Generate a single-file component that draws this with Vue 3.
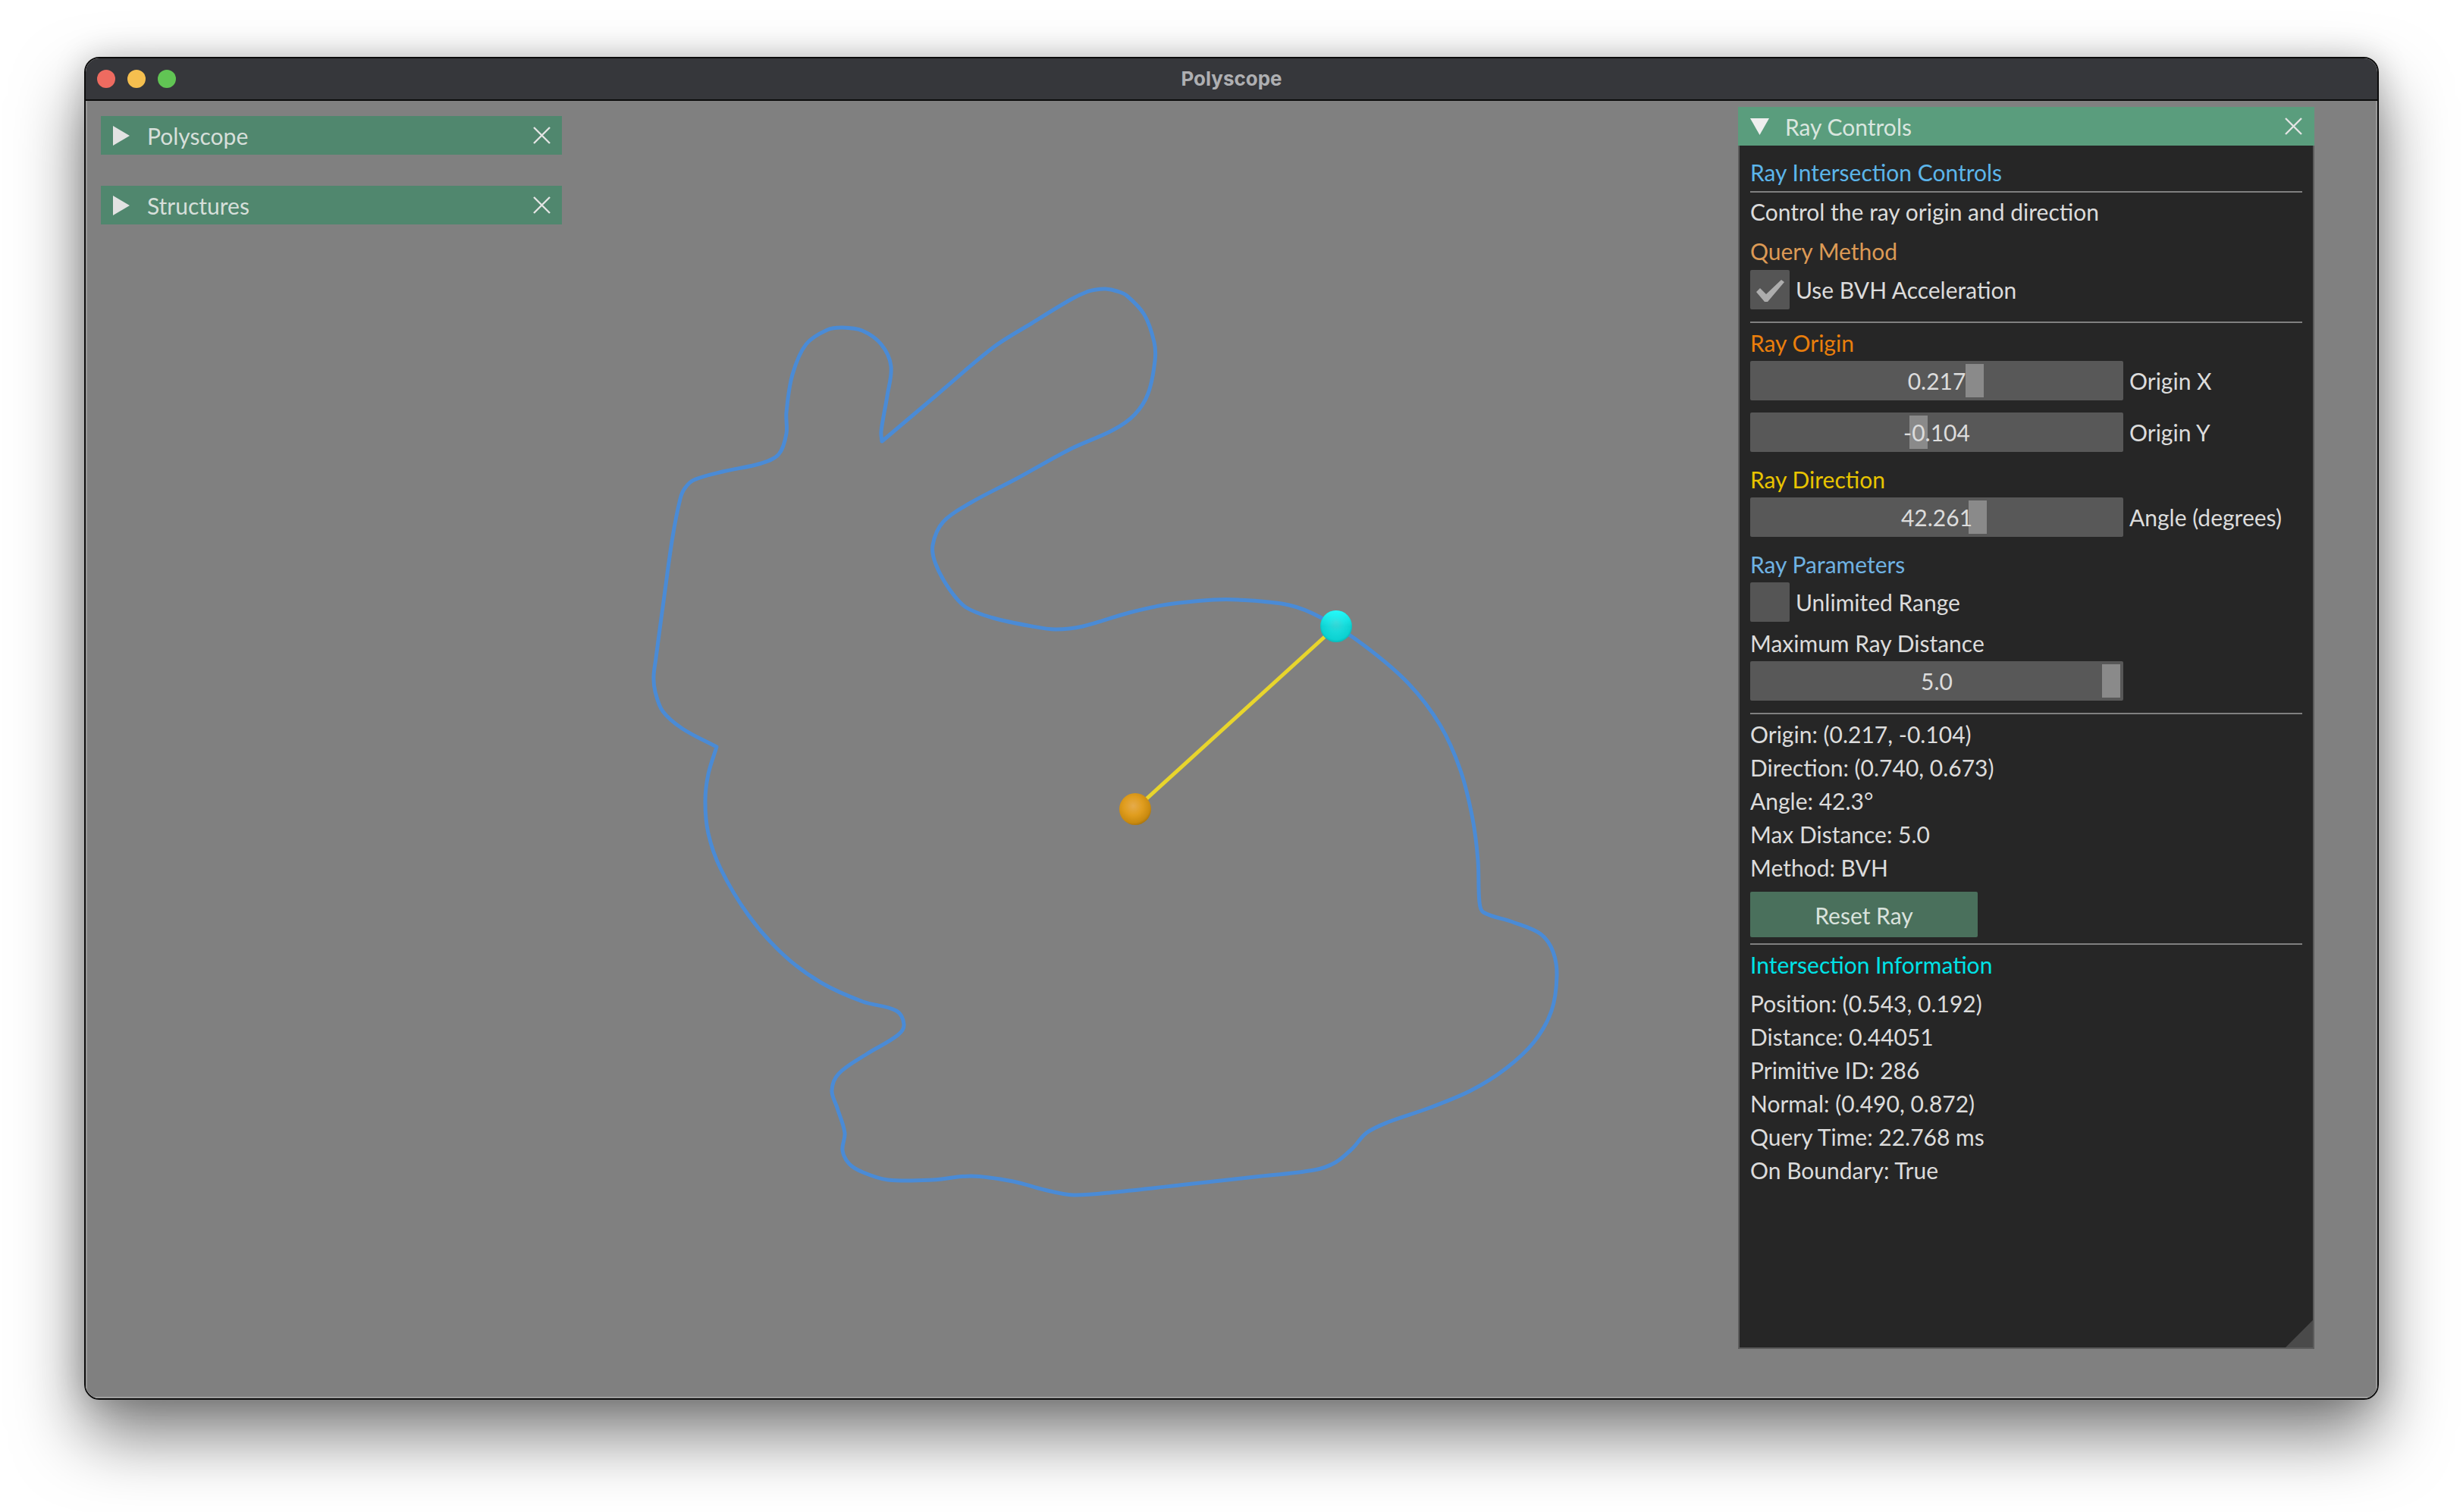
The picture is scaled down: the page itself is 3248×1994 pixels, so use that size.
<template>
  <div class="page">
    <div class="window">
      <div class="titlebar">
        <div class="lights">
          <span class="light red"></span>
          <span class="light yellow"></span>
          <span class="light green"></span>
        </div>
        <span class="window-title">Polyscope</span>
      </div>

      <div class="canvas">
        <!-- scene uses page coordinates, so the traced points read directly -->
        <svg class="scene" viewBox="113 133 3022 1711">
          <defs>
            <radialGradient id="cyanBall" cx="0.5" cy="0.5" r="0.56" fx="0.5" fy="0.36">
              <stop offset="0" stop-color="#3ed2d2" />
              <stop offset="0.45" stop-color="#18dada" />
              <stop offset="0.8" stop-color="#0cd2d2" />
              <stop offset="1" stop-color="#07a8a8" />
            </radialGradient>
            <linearGradient id="cyanRim" x1="0.5" y1="0" x2="0.5" y2="0.5">
              <stop offset="0" stop-color="#28ffff" stop-opacity="0.9" />
              <stop offset="1" stop-color="#28ffff" stop-opacity="0" />
            </linearGradient>
            <radialGradient id="orangeBall" cx="0.44" cy="0.4" r="0.66">
              <stop offset="0" stop-color="#e5ab4c" />
              <stop offset="0.45" stop-color="#e09d1e" />
              <stop offset="0.8" stop-color="#c98a10" />
              <stop offset="1" stop-color="#9c6a0a" />
            </radialGradient>
          </defs>
          <path class="outline" :d="outlinePath" />
          <line class="ray" x1="1497" y1="1067" x2="1762" y2="826" />
          <circle cx="1762" cy="826" r="21" fill="url(#cyanBall)" />
          <circle cx="1762" cy="826" r="21" fill="url(#cyanRim)" />
          <circle cx="1497" cy="1067" r="21" fill="url(#orangeBall)" />
        </svg>

        <div class="left-panels">
          <div v-for="name in collapsedPanels" :key="name" class="collapsed">
            <svg class="arrow-right" viewBox="0 0 22 26"><path d="M0 0L22 13L0 26Z" /></svg>
            <span class="panel-name">{{ name }}</span>
            <svg class="close" viewBox="0 0 23 23"><path d="M1 1L22 22M22 1L1 22" /></svg>
          </div>
        </div>

        <div class="ray-panel">
          <div class="ray-header">
            <svg class="arrow-down" viewBox="0 0 25 22"><path d="M0 0H25L12.5 22Z" /></svg>
            <span class="panel-name">Ray Controls</span>
            <svg class="close" viewBox="0 0 23 23"><path d="M1 1L22 22M22 1L1 22" /></svg>
          </div>

          <div class="ray-body">
            <div class="line heading blue">Ray Intersection Controls</div>
            <div class="sep tight"></div>
            <div class="line intro">Control the ray origin and direction</div>
            <div class="line heading query method">Query Method</div>
            <div class="check-row first">
              <span class="check">
                <svg viewBox="0 0 37 29"><path d="M0 16L5 11L13 19L33 0L37 3L15 29H11Z" /></svg>
              </span>
              <span>Use BVH Acceleration</span>
            </div>
            <div class="sep"></div>
            <div class="line heading origin after-sep">Ray Origin</div>
            <div v-for="s in originSliders" :key="s.label" class="slider-row">
              <div class="slider">
                <span class="grab" :style="{ left: s.grab + 'px' }"></span>
                <span class="slider-value">{{ s.value }}</span>
              </div>
              <span>{{ s.label }}</span>
            </div>
            <div class="line heading direction section">Ray Direction</div>
            <div class="slider-row">
              <div class="slider">
                <span class="grab" style="left: 288px"></span>
                <span class="slider-value">42.261</span>
              </div>
              <span>Angle (degrees)</span>
            </div>
            <div class="line heading params section">Ray Parameters</div>
            <div class="check-row">
              <span class="check"></span>
              <span>Unlimited Range</span>
            </div>
            <div class="line max-label">Maximum Ray Distance</div>
            <div class="slider-row">
              <div class="slider">
                <span class="grab" style="left: 464px"></span>
                <span class="slider-value">5.0</span>
              </div>
            </div>
            <div class="sep"></div>
            <div class="info-list after-sep">
              <div v-for="t in rayInfo" :key="t" class="line">{{ t }}</div>
            </div>
            <button class="reset">Reset Ray</button>
            <div class="sep under-reset"></div>
            <div class="line heading cyan after-sep">Intersection Information</div>
            <div class="info-list section">
              <div v-for="t in hitInfo" :key="t" class="line">{{ t }}</div>
            </div>
          </div>

          <svg class="grip" viewBox="0 0 36 36"><path d="M36 0V36H0Z" /></svg>
        </div>
      </div>
    </div>
  </div>
</template>

<script setup>
import { computed } from 'vue'

const collapsedPanels = ['Polyscope', 'Structures']

const originSliders = [
  { label: 'Origin X', value: '0.217', grab: 284 },
  { label: 'Origin Y', value: '-0.104', grab: 210 }
]

const rayInfo = [
  'Origin: (0.217, -0.104)',
  'Direction: (0.740, 0.673)',
  'Angle: 42.3°',
  'Max Distance: 5.0',
  'Method: BVH'
]

const hitInfo = [
  'Position: (0.543, 0.192)',
  'Distance: 0.44051',
  'Primitive ID: 286',
  'Normal: (0.490, 0.872)',
  'Query Time: 22.768 ms',
  'On Boundary: True'
]

// traced from the reference, clockwise from the notch between the ears
const outline = [
  [1163, 582], [1234, 522], [1310, 458], [1361, 426], [1412, 395], [1433, 385], [1445, 382],
  [1458, 381], [1473, 384], [1486, 390], [1509, 415], [1522, 451], [1523, 476], [1514, 519],
  [1496, 547], [1468, 567], [1412, 592], [1341, 631], [1280, 663], [1244, 688], [1230, 719],
  [1234, 744], [1252, 777], [1274, 801], [1310, 815], [1361, 826], [1392, 830], [1428, 826],
  [1489, 808], [1540, 797], [1600, 791], [1633, 791], [1700, 798], [1743, 815], [1800, 852],
  [1857, 901], [1899, 956], [1926, 1016], [1942, 1080], [1949, 1135], [1951, 1190],
  [1956, 1203], [1995, 1216], [2032, 1232], [2048, 1255], [2053, 1287], [2046, 1333],
  [2023, 1374], [1986, 1409], [1940, 1438], [1885, 1461], [1830, 1480], [1802, 1494],
  [1784, 1514], [1761, 1533], [1733, 1543], [1655, 1552], [1564, 1562], [1472, 1572],
  [1415, 1576], [1377, 1569], [1336, 1558], [1281, 1551], [1230, 1556], [1171, 1556],
  [1138, 1546], [1120, 1535], [1111, 1517], [1114, 1494], [1104, 1461], [1097, 1438],
  [1106, 1416], [1143, 1390], [1184, 1365], [1192, 1351], [1182, 1333], [1138, 1321],
  [1083, 1296], [1033, 1259], [987, 1207], [950, 1145], [934, 1099], [930, 1057], [934, 1021],
  [945, 985], [900, 961], [874, 938], [864, 912], [862, 892], [865, 868], [870, 830],
  [876, 786], [887, 708], [897, 658], [903, 644], [915, 633], [953, 622], [1004, 611],
  [1027, 599], [1037, 572], [1037, 544], [1045, 494], [1063, 454], [1091, 435], [1111, 432],
  [1137, 436], [1162, 454], [1175, 483], [1170, 522], [1162, 569]
]

// points where the curve has a hard corner
const corners = new Set([0, 84])

function unit(a, b) {
  const dx = b[0] - a[0]
  const dy = b[1] - a[1]
  const len = Math.hypot(dx, dy) || 1
  return [dx / len, dy / len]
}

// closed curve through the points; handles scale with each segment so uneven spacing doesn't overshoot
const outlinePath = computed(() => {
  const n = outline.length
  let d = `M${outline[0][0]} ${outline[0][1]}`
  for (let i = 0; i < n; i++) {
    const p0 = outline[(i - 1 + n) % n]
    const p1 = outline[i]
    const p2 = outline[(i + 1) % n]
    const p3 = outline[(i + 2) % n]
    const len = Math.hypot(p2[0] - p1[0], p2[1] - p1[1]) / 3
    const t1 = corners.has(i) ? unit(p1, p2) : unit(p0, p2)
    const t2 = corners.has((i + 1) % n) ? unit(p1, p2) : unit(p1, p3)
    const c1x = p1[0] + t1[0] * len
    const c1y = p1[1] + t1[1] * len
    const c2x = p2[0] - t2[0] * len
    const c2y = p2[1] - t2[1] * len
    d += `C${c1x.toFixed(1)} ${c1y.toFixed(1)} ${c2x.toFixed(1)} ${c2y.toFixed(1)} ${p2[0]} ${p2[1]}`
  }
  return d + 'Z'
})
</script>

<style>
html,
body {
  margin: 0;
  background: #fff;
}
</style>

<style scoped>
.page {
  box-sizing: border-box;
  width: 3248px;
  height: 1994px;
  padding: 75px 111px 148px 111px;
  font-family: Lato, "Open Sans", sans-serif;
  font-size: 30px;
  color: #dcdcdc;
  overflow: hidden;
}

.window {
  display: flex;
  flex-direction: column;
  height: 100%;
  box-sizing: border-box;
  border: 2px solid #0c0c0c;
  border-radius: 20px;
  overflow: hidden;
  box-shadow: 0 46px 90px rgba(0, 0, 0, 0.52), 0 0 40px rgba(0, 0, 0, 0.18);
}

.titlebar {
  position: relative;
  flex: none;
  height: 54px;
  display: flex;
  align-items: center;
  justify-content: center;
  background: #36373b;
  border-bottom: 2px solid #0c0c0c;
}

.lights {
  position: absolute;
  left: 15px;
  top: 15px;
  display: flex;
  gap: 16px;
}

.light {
  width: 24px;
  height: 24px;
  border-radius: 50%;
}

.red {
  background: #ee6b60;
}

.yellow {
  background: #f5bf4f;
}

.green {
  background: #61c554;
}

.window-title {
  padding-bottom: 2px;
  font-family: Inter, "Liberation Sans", sans-serif;
  font-weight: 700;
  font-size: 26px;
  color: #aeafb2;
}

.canvas {
  position: relative;
  flex: 1;
  background: #808080;
  box-shadow: inset 2px 0 0 #989898, inset -2px 0 0 #989898, inset 0 -2px 0 #a0a0a0;
}

.scene {
  position: absolute;
  left: 0;
  top: 0;
  width: 100%;
  height: 100%;
}

.outline {
  fill: none;
  stroke: #4a8bd6;
  stroke-width: 5;
  stroke-linejoin: round;
}

.ray {
  stroke: #e8d52c;
  stroke-width: 5;
}

.left-panels {
  position: absolute;
  left: 20px;
  top: 20px;
  display: flex;
  flex-direction: column;
  gap: 41px;
}

.collapsed {
  display: flex;
  align-items: center;
  box-sizing: border-box;
  width: 608px;
  height: 51px;
  padding: 0 15px 0 16px;
  background: #50876e;
  color: #d6dfda;
}

.arrow-right {
  flex: none;
  width: 22px;
  height: 26px;
  margin-right: 23px;
  fill: #e2e2e2;
}

.panel-name {
  flex: 1;
  line-height: 30px;
}

.close {
  flex: none;
  width: 23px;
  height: 23px;
  fill: none;
  stroke: #e4e4e4;
  stroke-width: 2.4;
}

.ray-panel {
  position: absolute;
  left: 2179px;
  top: 8px;
  box-sizing: border-box;
  width: 760px;
  height: 1638px;
  background: #262626;
  border: solid #5c5c5c;
  border-width: 0 2px 2px 2px;
}

.ray-header {
  display: flex;
  align-items: center;
  box-sizing: border-box;
  width: 760px;
  height: 51px;
  margin-left: -2px;
  padding: 0 16px;
  background: #5a9d7d;
  color: #d9e6df;
}

.arrow-down {
  flex: none;
  width: 25px;
  height: 22px;
  margin-right: 21px;
  fill: #eeeeee;
}

.ray-body {
  padding: 20px 14px 0;
}

.line {
  height: 30px;
  line-height: 30px;
  white-space: nowrap;
}

.heading.blue {
  color: #5cb5ea;
}

.heading.query {
  color: #dc9a55;
}

.heading.origin {
  color: #ea7f0c;
}

.heading.direction {
  color: #e8c400;
}

.heading.params {
  color: #6fb2e2;
}

.heading.cyan {
  color: #00e2e6;
}

.section {
  margin-top: 21px;
}

.after-sep {
  margin-top: 11px;
}

.intro {
  margin-top: 10px;
}

.method {
  margin-top: 22px;
}

.sep {
  height: 2px;
  margin-top: 16px;
  background: #808080;
}

.sep.tight {
  margin-top: 10px;
}

.sep.under-reset {
  margin-top: 8px;
}

.check-row {
  display: flex;
  align-items: center;
  gap: 8px;
  height: 52px;
  margin-top: 9px;
}

.check-row.first {
  margin-top: 10px;
}

.check {
  display: flex;
  align-items: center;
  justify-content: center;
  width: 52px;
  height: 52px;
  border-radius: 2px;
  background: #555555;
}

.check svg {
  width: 37px;
  height: 29px;
  margin-top: 3px;
  fill: #adadad;
}

.slider-row {
  display: flex;
  align-items: center;
  gap: 8px;
  height: 52px;
  margin-top: 9px;
}

.slider-row + .slider-row {
  margin-top: 16px;
}

.slider {
  position: relative;
  width: 492px;
  height: 52px;
  border-radius: 2px;
  background: #585858;
  text-align: center;
  line-height: 52px;
}

.slider-value {
  position: relative;
}

.grab {
  position: absolute;
  top: 4px;
  bottom: 4px;
  width: 24px;
  background: #8a8a8a;
}

.max-label {
  margin-top: 13px;
}

.info-list .line + .line {
  margin-top: 14px;
}

.reset {
  display: block;
  width: 300px;
  height: 60px;
  margin-top: 17px;
  padding: 2px 0 0;
  border: none;
  border-radius: 2px;
  background: #4a705c;
  color: #d9e2dd;
  font: inherit;
}

.grip {
  position: absolute;
  right: 0;
  bottom: 0;
  width: 36px;
  height: 36px;
  fill: #4a4a4a;
}
</style>
